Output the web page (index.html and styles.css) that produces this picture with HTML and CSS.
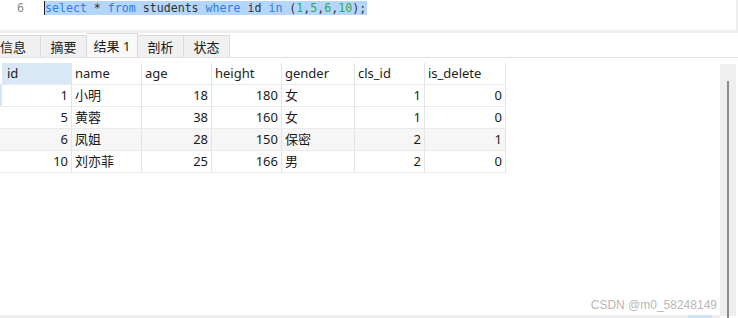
FILE: index.html
```html
<!DOCTYPE html>
<html lang="zh-CN">
<head>
  <meta charset="utf-8" />
  <title>查询结果</title>
  <link rel="stylesheet" href="styles.css">
</head>
<body>
  <div class="editor">
    <span class="line-no">6</span>
    <span class="sql"><span class="kw">select</span> * <span class="kw">from</span> students <span class="kw">where</span> id <span class="kw">in</span> (<span class="num">1</span>,<span class="num">5</span>,<span class="num">6</span>,<span class="num">10</span>);</span>
  </div>
  <div class="sep"></div>
  <div class="tabs">
    <div class="tab first">信息</div>
    <div class="tab">摘要</div>
    <div class="tab active">结果 1</div>
    <div class="tab">剖析</div>
    <div class="tab">状态</div>
  </div>
  <div class="result">
    <div class="grid">
      <div class="row head">
        <div class="cell sel">id</div>
        <div class="cell">name</div>
        <div class="cell">age</div>
        <div class="cell">height</div>
        <div class="cell">gender</div>
        <div class="cell">cls_id</div>
        <div class="cell">is_delete</div>
      </div>
      <div class="row current">
        <div class="cell r">1</div><div class="cell">小明</div><div class="cell r">18</div><div class="cell r">180</div><div class="cell">女</div><div class="cell r">1</div><div class="cell r">0</div>
      </div>
      <div class="row">
        <div class="cell r">5</div><div class="cell">黄蓉</div><div class="cell r">38</div><div class="cell r">160</div><div class="cell">女</div><div class="cell r">1</div><div class="cell r">0</div>
      </div>
      <div class="row alt">
        <div class="cell r">6</div><div class="cell">凤姐</div><div class="cell r">28</div><div class="cell r">150</div><div class="cell">保密</div><div class="cell r">2</div><div class="cell r">1</div>
      </div>
      <div class="row">
        <div class="cell r">10</div><div class="cell">刘亦菲</div><div class="cell r">25</div><div class="cell r">166</div><div class="cell">男</div><div class="cell r">2</div><div class="cell r">0</div>
      </div>
    </div>
    <div class="vscroll"><div class="thumb"></div></div>
  </div>
  <div class="mark">CSDN @m0_58248149</div>
  <div class="hscroll"><div class="hthumb"></div></div>
</body>
</html>
```

FILE: styles.css
```css
body {
  margin: 0;
  width: 738px;
  height: 318px;
  overflow: hidden;
  background: #fff;
  font-family: "Noto Sans", "Noto Sans CJK SC", sans-serif;
  font-size: 13px;
  color: #1a1a1a;
  position: relative;
}
.editor {
  height: 30px;
  display: flex;
  align-items: flex-start;
  border-right: 2px solid #eeeeee;
  font-family: "DejaVu Sans Mono", monospace;
  font-size: 11.6px;
}
.line-no {
  width: 44px;
  padding-left: 17px;
  box-sizing: border-box;
  color: #8a8a8a;
  line-height: 15px;
  margin-top: 1px;
}
.sql {
  background: #b5d6fb;
  border-left: 1px solid #222;
  line-height: 14px;
  margin-top: 1px;
  padding-right: 1px;
  color: #333;
}
.kw { color: #2f7de0; }
.num { color: #2fa84f; }
.sep {
  height: 3px;
  background: #efefef;
}
.tabs {
  display: flex;
  align-items: flex-end;
  height: 24px;
  border-bottom: 1px solid #e2e2e2;
}
.tab {
  height: 22px;
  line-height: 22px;
  width: 46px;
  box-sizing: border-box;
  text-align: center;
  white-space: nowrap;
  background: #f0f0f0;
  border: 1px solid #dadada;
  border-bottom: none;
  border-left: none;
  font-size: 13px;
}
.tab.first {
  width: 41px;
  text-align: left;
}
.tab.active {
  width: 51px;
  height: 24px;
  line-height: 24px;
  background: #f9f9f9;
}
.result {
  display: flex;
  justify-content: space-between;
  margin-top: 5px;
}
.grid {
  display: flex;
  flex-direction: column;
}
.row {
  display: grid;
  grid-template-columns: 72px 70px 70px 70px 73px 70px 81px;
  height: 22px;
  border-bottom: 1px solid #eaeaea;
  box-sizing: border-box;
}
.row.alt { background: #f6f6f6; }
.row.current .cell:first-child { box-shadow: inset 2px 0 #d6e6f7; }
.cell {
  border-right: 1px solid #e4e4e4;
  padding: 0 3px;
  line-height: 21px;
  white-space: nowrap;
  overflow: hidden;
}
.cell:first-child { padding-left: 5px; }
.cell.r { text-align: right; }
.head .cell { color: #222; }
.head .cell.sel {
  background: #d9e8f7;
  margin-left: 2px;
}
.vscroll {
  width: 16px;
  height: 252px;
  background: #efefef;
  margin-right: 2px;
  margin-top: 1px;
  display: flex;
  justify-content: center;
}
.thumb {
  width: 2px;
  height: 240px;
  margin-top: 17px;
  background: #8c8c8c;
}
.mark {
  position: absolute;
  right: 21px;
  top: 298px;
  font-size: 12px;
  color: #b8b8b8;
  font-family: "Liberation Sans", sans-serif;
}
.hscroll {
  position: absolute;
  left: 0;
  right: 18px;
  top: 315px;
  height: 3px;
  background: #eeeeee;
}
.hthumb {
  position: absolute;
  left: 688px;
  width: 24px;
  height: 3px;
  background: #cfe3f6;
}
```
